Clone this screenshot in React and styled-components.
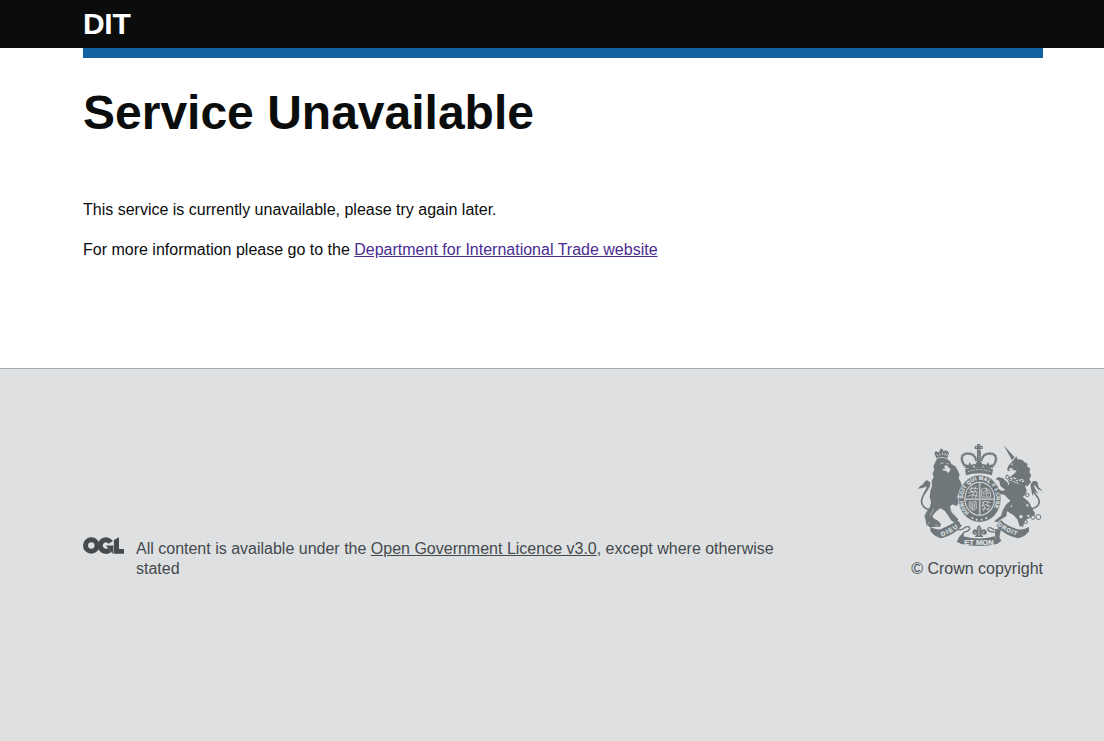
import React from 'react';
import styled, { createGlobalStyle } from 'styled-components';

const GlobalStyle = createGlobalStyle`
  * { box-sizing: border-box; }
  body {
    margin: 0;
    background: #dee0e2;
    color: #0b0c0c;
    font: 16px/20px "Liberation Sans", Arial, sans-serif;
  }
`;

const Page = styled.div`
  min-height: 741px;
  display: flex;
  flex-direction: column;
`;

const Container = styled.div`
  width: 960px;
  margin-left: 83px;
`;

const Header = styled.header`
  height: 48px;
  background: #0b0c0c;
  color: #fff;
`;

const Brand = styled.div`
  padding-top: 9px;
  font-size: 30px;
  line-height: 30px;
  font-weight: 700;
  letter-spacing: -0.3px;
`;

const Main = styled.main`
  height: 320px;
  background: #fff;
`;

const BlueBar = styled.div`
  height: 10px;
  background: #1261a3;
`;

const Title = styled.h1`
  margin: 30px 0 62px;
  font-size: 48px;
  line-height: 50px;
  font-weight: 700;
`;

const Paragraph = styled.p`
  margin: 0 0 20px;
`;

const Link = styled.a`
  color: ${(p) => (p.$muted ? 'inherit' : '#4c2c92')};
  text-decoration: underline;
`;

const Footer = styled.footer`
  flex: 1;
  border-top: 1px solid #a1acb2;
  background: #dee0e2;
  color: #454a4c;
`;

const FooterRow = styled(Container)`
  display: flex;
  align-items: flex-end;
  justify-content: space-between;
  padding-top: 75px;
`;

const Licence = styled.div`
  display: flex;
  align-items: flex-start;
  gap: 12px;
  width: 710px;
`;

const LicenceText = styled.p`
  margin: 1px 0 0;
  width: 650px;
`;

const Logo = styled.svg`
  flex: none;
  width: 41px;
  height: 17px;
  margin-top: -1px;
`;

const Copyright = styled.div`
  display: flex;
  flex-direction: column;
  align-items: flex-end;
  gap: 13px;
  white-space: nowrap;
`;

const CrestSvg = styled.svg`
  display: block;
  width: 125px;
  height: 102px;
`;

const Motto = styled.text`
  font: 700 ${(p) => p.$size}px "Liberation Sans", Arial, sans-serif;
  fill: #dee0e2;
  stroke: #dee0e2;
  stroke-width: 0.6px;
`;

const ink = '#6f777b';
const paper = '#dee0e2';

function OglLogo() {
  return (
    <Logo viewBox="0 0 483.2 195.7" fill="none" stroke="#454a4c" strokeWidth="60" aria-label="OGL">
      <circle cx="97.8" cy="97.8" r="67.8" />
      <path d="M327 61A67.8 67.8 0 1 0 314 151" />
      <path d="M270 98H357V195H352Z" fill="#454a4c" stroke="none" />
      <path d="M364 32L424 0V138H483.2V195H364Z" fill="#454a4c" stroke="none" />
    </Logo>
  );
}

function Crest() {
  return (
    <CrestSvg viewBox="39 24 375 306" fill={ink} stroke="none">
      <defs>
        <path id="garter" d="M192 231A50 56 0 1 1 262 224" />
        <path id="dieu" d="M110 301Q139 292 168 268" />
        <path id="droit" d="M277 268Q305 290 344 301" />
      </defs>

      {/* lion */}
      <path d="M93 74L104 72L126 71L135 75L139 84L151 91L158 103L164 116L161 126L167 138L173 154L162 166L158 180L152 193L145 203L135 211L140 227L153 242L160 250L154 259L145 258L138 253L130 239L119 224L106 217L94 226L82 240L86 247L99 254L108 264L105 273L94 272L75 274L64 266L62 251L58 241L64 229L75 212L78 198L74 183L76 164L81 151L80 134L86 124L83 112L88 101L85 91Z" />
      <path d="M149 145L160 153L176 150L174 160L180 166L167 174L153 171L142 166ZM139 180L157 184L170 193L162 199L155 210L140 204Z" />
      <path d="M76 222C52 218 43 198 55 178C64 164 70 158 66 146" fill="none" stroke={ink} strokeWidth="5" />
      <path d="M76 139L65 132L59 137L54 145L45 151L39 158L53 156L67 150L61 163L54 172L67 164L75 151Z" />
      <path d="M117 90L127 88L129 94L135 97L136 103L130 111L122 104L112 103L115 98L121 98Z" fill={paper} />
      <path d="M106 82L116 81M124 82L131 84" stroke={paper} strokeWidth="2" />
      <path d="M75 239L86 218M67 266L75 257M91 266L100 268M136 220L146 237" fill="none" stroke={paper} strokeWidth="1.5" />

      {/* lion's crown */}
      <path d="M94 66L88 52L92 46L101 49L107 38H112L115 45L124 43L132 50L127 67Q112 61 94 66Z" />
      <path d="M95 55L100 60M103 52L106 58M113 50V57M122 50L119 58M128 54L124 60M99 45L103 46M117 42L120 43" stroke={paper} strokeWidth="2.6" />
      <path d="M94 68Q112 63 129 69L127 76Q112 70 95 76Z" />

      {/* royal crown */}
      <path d="M216 24H226V30H233V39H226V47H216V39H209V30H216Z" />
      <path d="M219 29H223M213 34.500H217M225 34.500H229M219 41H223" stroke={paper} strokeWidth="2" />
      <path d="M184 94C165 75 167 54 185 53C201 51 211 59 214 75M260 94C278 76 277 54 258 53C242 51 232 59 229 75" fill="none" stroke={ink} strokeWidth="4" />
      <path d="M184 94C165 75 167 54 185 53C201 51 211 59 214 75M260 94C278 76 277 54 258 53C242 51 232 59 229 75" fill="none" stroke={ink} strokeWidth="8" strokeDasharray="4 2" />
      <path d="M216 46H228L227 75L236 92H208L216 76Z" />
      <path d="M222 53V76" stroke={paper} strokeWidth="2" strokeDasharray="3 4" />
      <path d="M180 100Q222 86 264 100L261 118Q222 105 183 118Z" />
      <path d="M185 98L181 84L190 88L194 78L199 87L207 83L204 95ZM238 95L235 83L244 87L249 78L254 88L263 84L258 98ZM210 93L206 83L217 86L222 76L228 86L238 83L233 93Z" />
      <path d="M189 107Q222 95 256 107" fill="none" stroke={paper} strokeWidth="3" strokeDasharray="4 4" />

      {/* garter and shield */}
      <ellipse cx="224" cy="188" rx="64" ry="71" stroke={paper} strokeWidth="2" />
      <ellipse cx="224" cy="188" rx="46" ry="51" fill={paper} />
      <ellipse cx="224" cy="188" rx="43" ry="48" />
      <path d="M181 190H267M224 140V236" stroke={paper} strokeWidth="4.500" />
      <path d="M181 190H267M224 140V236" stroke={ink} strokeWidth="1.2" />
      <g fill="none" stroke={paper} strokeWidth="2.2">
        <path d="M193 160L207 156L219 159M190 170L205 166L218 169M188 181L203 176L219 181M201 152L197 166L207 170L201 184M213 151L209 161L216 173L210 186" />
        <path d="M230 160Q242 151 255 164L257 183H230ZM237 178L236 166L247 163L251 173L242 170L246 181M242 156L246 165" />
        <path d="M193 198Q203 200 213 196L214 218Q203 229 193 213ZM198 201V217M203 202V221M208 201V218" />
        <path d="M231 200L240 196L256 200M229 210L241 206L257 211M230 220L242 216L251 221M237 196L233 208L240 213L235 226M250 196L246 207L253 215L247 225" />
      </g>
      <Motto $size="15.500"><textPath href="#garter" textLength="242">HONI SOIT QUI MAL Y PENSE</textPath></Motto>
      {[[202, 246], [215, 251], [230, 251], [244, 246]].map(([x, y]) => <circle key={x} cx={x} cy={y} r="2.7" fill={paper} />)}

      {/* unicorn */}
      <path d="M296 28L329 64L321 73Z" />
      <path d="M326 72L334 61L338 70L351 71L359 79L368 83L366 91L376 98L373 109L379 118L373 129L378 139L367 151L360 148L365 164L360 178L345 187L335 188L328 201L316 212L336 220L349 235L349 257L356 273L343 270L338 251L325 237L306 226L304 241L288 250L278 259L267 256L276 249L288 239L294 221L304 205L316 194L307 186L296 174L301 157L313 143L307 128L319 120L329 112L335 104L321 101L310 106L306 101L310 90L319 79Z" />
      <path d="M309 141L294 127L280 123L272 129L283 135L286 150L302 163L289 164L279 158L273 164L281 173L296 176L308 171Z" />
      <path d="M318 84L325 82L322 88ZM310 100L319 96L324 98L322 101L314 102ZM304 113L316 119L344 131L353 128L358 139L339 143L303 129Z" fill={paper} />
      <path d="M304 116L314 126L322 121L327 134L337 128L343 139L352 132M304 126L344 141L359 139" fill="none" stroke={ink} strokeWidth="4" />
      <path d="M324 191L349 177L361 189L372 198L382 218L391 234L379 243L362 252L354 270L344 260L350 244L341 230L320 217Z" />
      <path d="M363 220C397 219 410 204 398 184C388 169 377 161 380 146C383 136 394 134 398 145" fill="none" stroke={ink} strokeWidth="5" />
      <path d="M377 148L382 138L392 135L398 143L401 154L414 166L399 160L387 145L389 157L401 173L388 166L382 180Z" />
      <g fill={paper} stroke={ink} strokeWidth="3">
        {[[307, 124, 5], [279, 172, 4], [367, 177, 5], [367, 208, 5], [348, 242, 6.500], [370, 240, 5], [384, 244, 6], [400, 243, 7.500], [362, 258, 5]].map(([x, y, r]) => <circle key={`${x}-${y}`} cx={x} cy={y} r={r} />)}
      </g>

      {/* ribbon */}
      <path d="M164 259Q147 265 153 276Q162 288 179 275Q191 268 195 277Q191 287 177 288M281 259Q296 264 285 277Q272 287 258 276Q249 272 248 281Q253 289 268 288" fill="none" stroke={ink} strokeWidth="4" />
      <path d="M76 273Q97 283 108 279Q138 267 157 253L170 269Q155 292 110 307Q91 305 76 285Z" />
      <path d="M372 273Q350 284 335 279Q302 268 288 252L274 269Q298 297 338 307Q358 305 372 286Z" />
      <path d="M175 301Q222 314 269 301L279 323Q223 337 166 323Z" />
      <path d="M178 285L175 306L168 323L155 317L162 304ZM269 284L271 304L278 323L289 314L283 304L288 279Z" />
      <Motto $size="18.500"><textPath href="#dieu" textLength="56">DIEU</textPath></Motto>
      <Motto $size="17.500"><textPath href="#droit" textLength="65">DROIT</textPath></Motto>
      <Motto $size="20" x="178" y="326" textLength="88" lengthAdjust="spacingAndGlyphs">ET MON</Motto>

      {/* fleur-de-lis */}
      <path d="M222 267Q237 280 224 291Q235 273 244 284Q249 294 238 296Q231 295 229 293L235 303H209L216 293Q206 300 202 291Q202 280 211 280Q219 282 220 291Q209 278 222 267Z" />
      <path d="M222 273V301M207 287L213 293M238 286L230 293" stroke={paper} strokeWidth="2" />
    </CrestSvg>
  );
}

export default function App() {
  return (
    <Page>
      <GlobalStyle />
      <Header>
        <Container><Brand>DIT</Brand></Container>
      </Header>
      <Main>
        <Container>
          <BlueBar />
          <Title>Service Unavailable</Title>
          <Paragraph>This service is currently unavailable, please try again later.</Paragraph>
          <Paragraph>For more information please go to the <Link href="#">Department for International Trade website</Link></Paragraph>
        </Container>
      </Main>
      <Footer>
        <FooterRow>
          <Licence>
            <OglLogo />
            <LicenceText>All content is available under the <Link $muted href="#">Open Government Licence v3.0</Link>, except where otherwise stated</LicenceText>
          </Licence>
          <Copyright>
            <Crest />
            <span>© Crown copyright</span>
          </Copyright>
        </FooterRow>
      </Footer>
    </Page>
  );
}
